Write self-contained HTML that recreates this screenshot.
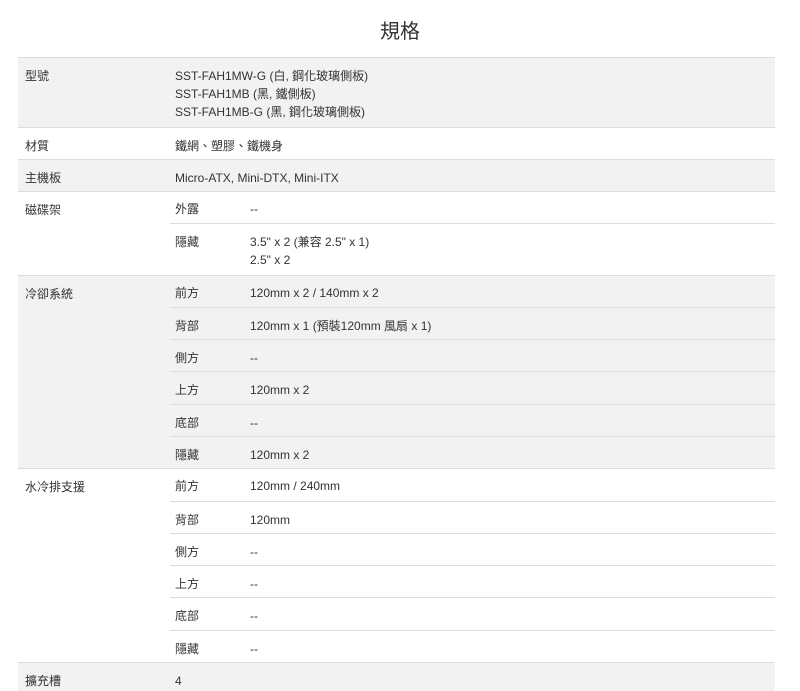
<!DOCTYPE html>
<html><head><meta charset="utf-8"><style>
*{margin:0;padding:0;box-sizing:border-box}
body{width:800px;height:691px;background:#fff;font-family:"Liberation Sans","Noto Sans CJK TC",sans-serif;font-size:12px;color:#333;position:relative;overflow:hidden}
.t{position:absolute;left:0;width:800px;top:20px;text-align:center;font-size:20px;color:#333;line-height:24px}
.r{position:absolute;left:18px;width:757px;border-top:1px solid #ddd}
.g{background:#f2f2f2}
.l{position:absolute;left:7px;top:9px;line-height:18px}
.v{position:absolute;left:157px;top:9px;line-height:18px}
.s{position:absolute;left:152px;right:0;border-top:1px solid #ddd}
.s .a{position:absolute;left:5px;top:9px;line-height:18px}
.s .b{position:absolute;left:80px;top:9px;line-height:18px}
</style></head><body>
<div class="t">規格</div>
<div class="r g" style="top:57px;height:70px"><div class="l">型號</div><div class="v">SST-FAH1MW-G (白, 鋼化玻璃側板)<br>SST-FAH1MB (黑, 鐵側板)<br>SST-FAH1MB-G (黑, 鋼化玻璃側板)</div></div>
<div class="r" style="top:127px;height:32px"><div class="l">材質</div><div class="v">鐵網、塑膠、鐵機身</div></div>
<div class="r g" style="top:159px;height:32px"><div class="l">主機板</div><div class="v">Micro-ATX, Mini-DTX, Mini-ITX</div></div>
<div class="r" style="top:191px;height:84px"><div class="l">磁碟架</div>
<div class="s" style="top:-1px;height:32px;border-top:none"><div class="a">外露</div><div class="b">--</div></div>
<div class="s" style="top:31px;height:52px"><div class="a">隱藏</div><div class="b">3.5" x 2 (兼容 2.5" x 1)<br>2.5" x 2</div></div></div>
<div class="r g" style="top:275px;height:193px"><div class="l">冷卻系統</div>
<div class="s" style="top:-1px;height:32px;border-top:none"><div class="a">前方</div><div class="b">120mm x 2 / 140mm x 2</div></div>
<div class="s" style="top:31px;height:32px"><div class="a">背部</div><div class="b">120mm x 1 (預裝120mm 風扇 x 1)</div></div>
<div class="s" style="top:63px;height:32px"><div class="a">側方</div><div class="b">--</div></div>
<div class="s" style="top:95px;height:33px"><div class="a">上方</div><div class="b">120mm x 2</div></div>
<div class="s" style="top:128px;height:32px"><div class="a">底部</div><div class="b">--</div></div>
<div class="s" style="top:160px;height:32px"><div class="a">隱藏</div><div class="b">120mm x 2</div></div></div>
<div class="r" style="top:468px;height:194px"><div class="l">水冷排支援</div>
<div class="s" style="top:-1px;height:32px;border-top:none"><div class="a">前方</div><div class="b">120mm / 240mm</div></div>
<div class="s" style="top:32px;height:32px"><div class="a">背部</div><div class="b">120mm</div></div>
<div class="s" style="top:64px;height:32px"><div class="a">側方</div><div class="b">--</div></div>
<div class="s" style="top:96px;height:32px"><div class="a">上方</div><div class="b">--</div></div>
<div class="s" style="top:128px;height:33px"><div class="a">底部</div><div class="b">--</div></div>
<div class="s" style="top:161px;height:32px"><div class="a">隱藏</div><div class="b">--</div></div></div>
<div class="r g" style="top:662px;height:29px"><div class="l">擴充槽</div><div class="v">4</div></div>
</body></html>
